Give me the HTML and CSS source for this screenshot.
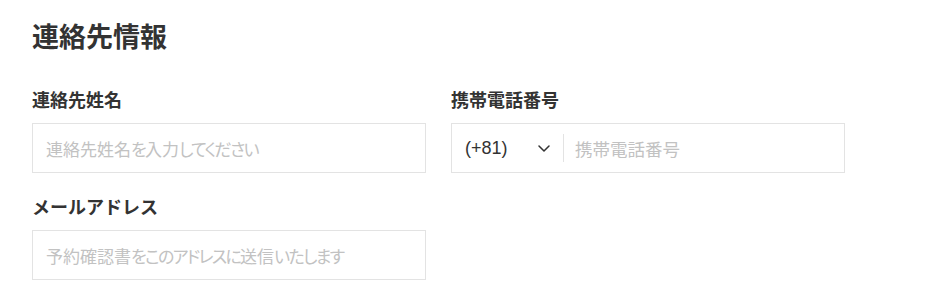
FILE: index.html
```html
<!DOCTYPE html>
<html lang="ja">
<head>
<meta charset="utf-8">
<title>連絡先情報</title>
<link rel="stylesheet" href="styles.css">
</head>
<body>
<section class="contact">
  <h1 class="title">連絡先情報</h1>
  <div class="grid">
    <div class="field">
      <div class="label">連絡先姓名</div>
      <div class="input" role="textbox"><span class="ph">連絡先姓名<span class="kana">を</span>入力<span class="kana">してください</span></span></div>
    </div>
    <div class="field">
      <div class="label">携帯電話番号</div>
      <div class="phone">
        <div class="cc">
          <span class="cc-code">(+81)</span>
          <svg class="chev" width="12" height="7" viewBox="0 0 12 7" aria-hidden="true"><polyline points="1,1 6,6 11,1" fill="none" stroke="#333" stroke-width="1.5" stroke-linecap="round" stroke-linejoin="round"/></svg>
        </div>
        <span class="divider"></span>
        <div class="phone-input" role="textbox"><span class="ph">携帯電話番号</span></div>
      </div>
    </div>
    <div class="field">
      <div class="label">メールアドレス</div>
      <div class="input" role="textbox"><span class="ph">予約確認書<span class="kana">をこのアドレスに</span>送信<span class="kana">いたします</span></span></div>
    </div>
  </div>
</section>
</body>
</html>
```
FILE: styles.css
```css
* { box-sizing: border-box; }
html, body { margin: 0; padding: 0; background: #fff; }
body {
  font-family: "Noto Sans CJK JP", "Noto Sans", sans-serif;
  color: #333;
}
.contact {
  padding: 18px 32px 0 32px;
}
.title {
  margin: 0;
  font-size: 27px;
  line-height: 35px;
  font-weight: 700;
  color: #333;
}
.grid {
  margin-top: 34px;
  display: grid;
  grid-template-columns: 394px 394px;
  column-gap: 25px;
  row-gap: 21px;
}
.field {
  display: flex;
  flex-direction: column;
}
.label {
  font-size: 18px;
  line-height: 24px;
  font-weight: 700;
  color: #333;
  margin-bottom: 12px;
}
.input, .phone-input {
  font-size: 17px;
  font-feature-settings: "palt" 1;
  display: flex;
  align-items: center;
}
.input {
  height: 50px;
  width: 100%;
  border: 1px solid #e3e3e3;
  padding: 0 13px;
  background: #fff;
}
.ph {
  color: #c2c2c2;
  white-space: nowrap;
}
.kana {
  letter-spacing: -1.7px;
}
.phone {
  height: 50px;
  border: 1px solid #e3e3e3;
  display: flex;
  align-items: center;
  padding: 0 13px;
}
.cc {
  width: 85px;
  display: flex;
  align-items: center;
  justify-content: space-between;
}
.cc-code {
  font-family: "Liberation Sans", Arial, sans-serif;
  font-size: 18px;
  color: #333;
}
.chev { display: block; }
.divider {
  width: 1px;
  height: 28px;
  background: #e3e3e3;
  margin-left: 13px;
}
.phone-input {
  flex: 1;
  min-width: 0;
  height: 100%;
  padding-left: 11px;
  font-size: 17.5px;
}
```
